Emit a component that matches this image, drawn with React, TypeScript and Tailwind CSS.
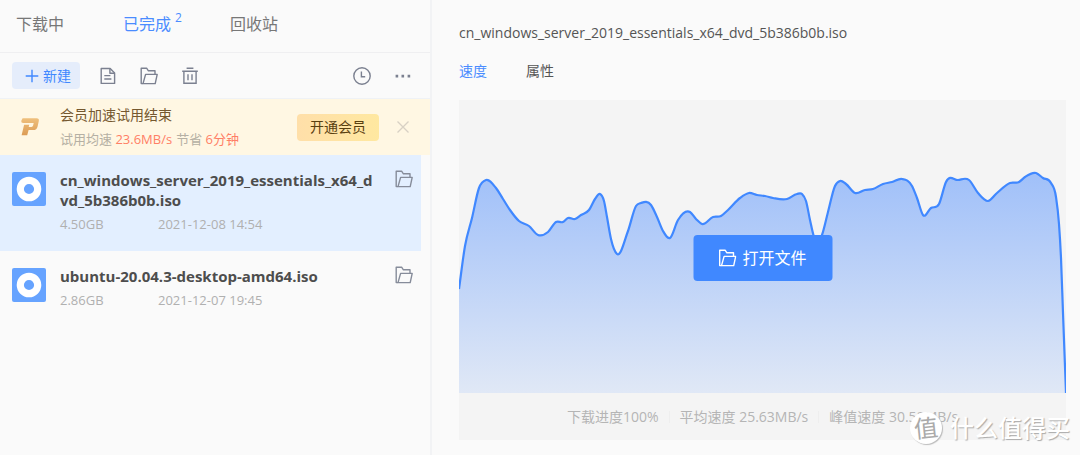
import { useState } from 'react';
import clsx from 'clsx';

type Point = [number, number];

const CHART_WIDTH = 607;
const CHART_HEIGHT = 293;

const speedPoints: Point[] = [
  [0, 189], [6, 146], [13, 118], [20, 88], [27, 80], [37, 88], [44, 99], [51, 110],
  [60, 121], [70, 126], [79, 135], [89, 132], [97, 122], [104, 122], [109, 118], [116, 119],
  [122, 115], [130, 110], [136, 99], [141, 94], [145, 101], [148, 117], [152, 139], [158, 154],
  [169, 131], [177, 106], [182, 103], [192, 105], [198, 117], [204, 131],
  [211, 138], [219, 120], [231, 112], [237, 119], [243, 124], [254, 117], [262, 116],
  [269, 110], [281, 98], [290, 93], [298, 95], [306, 96], [314, 98], [328, 99], [338, 94], [343, 94],
  [347, 101], [351, 120], [355, 137], [359, 143], [363, 135], [369, 112], [376, 86], [381, 81], [387, 84],
  [396, 93], [406, 90], [414, 89], [424, 84], [433, 82], [443, 79], [453, 86], [458, 98],
  [464, 115], [472, 108], [480, 104], [487, 82], [499, 80], [510, 80],
  [519, 93], [529, 101], [538, 93], [551, 83], [560, 82], [566, 77], [577, 73], [584, 78], [592, 83],
  [597, 97], [600, 124], [602, 158], [604, 213], [607, 293],
];

// Smooth curve through all points, the slope at each one weighted by its neighbours' distance
function smoothPath(points: Point[]) {
  const last = points.length - 1;
  const slopeTo = (i: number) => (points[i + 1][1] - points[i][1]) / (points[i + 1][0] - points[i][0]);
  const slopes = points.map((p, i) => {
    if (i === 0) return slopeTo(0);
    if (i === last) return slopeTo(last - 1);
    const before = p[0] - points[i - 1][0];
    const after = points[i + 1][0] - p[0];
    return (slopeTo(i - 1) * after + slopeTo(i) * before) / (before + after);
  });

  let d = `M${points[0][0]},${points[0][1]}`;
  for (let i = 0; i < last; i++) {
    const [x1, y1] = points[i];
    const [x2, y2] = points[i + 1];
    const h = (x2 - x1) / 3;
    d += ` C${x1 + h},${y1 + slopes[i] * h} ${x2 - h},${y2 - slopes[i + 1] * h} ${x2},${y2}`;
  }
  return d;
}

const tasks = [
  {
    id: 1,
    name: 'cn_windows_server_2019_essentials_x64_dvd_5b386b0b.iso',
    size: '4.50GB',
    time: '2021-12-08 14:54',
  },
  {
    id: 2,
    name: 'ubuntu-20.04.3-desktop-amd64.iso',
    size: '2.86GB',
    time: '2021-12-07 19:45',
  },
];

const tabs = [
  { id: 'downloading', label: '下载中' },
  { id: 'done', label: '已完成', count: 2 },
  { id: 'trash', label: '回收站' },
];

function FolderIcon({ className }: { className?: string }) {
  return (
    <svg viewBox="0 0 18 18" className={clsx('w-[18px] h-[18px]', className)} fill="none" stroke="currentColor" strokeWidth="1.4" strokeLinejoin="round">
      <path d="M3 16.6H1.2V1.2H6.6L8.4 3.8H15V7.2" />
      <path d="M3 16.6L5.6 7.4H17.2L15.2 16.6Z" />
    </svg>
  );
}

function FileIcon() {
  return (
    <svg viewBox="0 0 18 18" className="w-[18px] h-[18px]" fill="none" stroke="currentColor" strokeWidth="1.4" strokeLinejoin="round">
      <path d="M2.2 1.5H11.2L15.6 5.9V16.4H2.2Z" />
      <path d="M10.9 1.7V6.2H15.4M5.3 8.6H11.4M5.3 12H12.4" />
    </svg>
  );
}

function TrashIcon() {
  return (
    <svg viewBox="0 0 18 18" className="w-[18px] h-[18px]" fill="none" stroke="currentColor" strokeWidth="1.4">
      <path d="M1.2 4.2H16.8M5.6 1.3H12.4M2.9 4.2V16.3H15.1V4.2M7 7.2V13.2M11 7.2V13.2" />
    </svg>
  );
}

function ClockIcon() {
  return (
    <svg viewBox="0 0 18 18" className="w-[18px] h-[18px]" fill="none" stroke="currentColor" strokeWidth="1.4">
      <circle cx="9" cy="9" r="8.2" />
      <path d="M8.4 4.6V9.8H12.2" />
    </svg>
  );
}

function MoreIcon() {
  return (
    <svg viewBox="0 0 18 18" className="w-[18px] h-[18px]" fill="currentColor">
      <path d="M1.6 7.8h2.6v2.6H1.6zM7.5 7.8h2.6v2.6H7.5zM13.6 7.8h2.6v2.6h-2.6z" />
    </svg>
  );
}

function VipIcon() {
  return (
    <svg viewBox="0 0 20 20" className="w-5 h-5">
      <defs>
        <linearGradient id="vip" x1="0" y1="0" x2="0" y2="1">
          <stop offset="0" stopColor="#efc07d" />
          <stop offset="1" stopColor="#dc9c55" />
        </linearGradient>
      </defs>
      <path
        fill="url(#vip)"
        d="M2.6 1.2H16.6Q19.4 1.2 18.8 4L17.6 9.4Q16.8 13 13.2 13H8.6L7.2 18.2H1.6L4.1 7.8H9.2L8.7 10H11.4Q12.8 10 13.1 8.6L13.7 6.1H3.4Q.9 6.1 1.4 3.6Z"
      />
    </svg>
  );
}

function DiscIcon() {
  return (
    <svg viewBox="0 0 34 34" className="w-[34px] h-[34px] shrink-0">
      <rect width="34" height="34" rx="2" fill="#66a3ff" />
      <circle cx="17" cy="17" r="8.7" fill="none" stroke="#fff" strokeWidth="7.2" />
    </svg>
  );
}

function SpeedChart() {
  const line = smoothPath(speedPoints);
  return (
    <svg
      viewBox={`0 0 ${CHART_WIDTH} ${CHART_HEIGHT}`}
      preserveAspectRatio="none"
      className="block w-full h-[293px]"
    >
      <defs>
        <linearGradient id="speed" gradientUnits="userSpaceOnUse" x1="0" y1="73" x2="0" y2="293">
          <stop offset="0" stopColor="#a0c0f9" />
          <stop offset="1" stopColor="#e0e8f6" />
        </linearGradient>
      </defs>
      <path d={`${line} L0,${CHART_HEIGHT} Z`} fill="url(#speed)" />
      <path d={line} fill="none" stroke="#4088ff" strokeWidth="2.2" vectorEffect="non-scaling-stroke" />
    </svg>
  );
}

export default function App() {
  const [tab, setTab] = useState('done');
  const [detailTab, setDetailTab] = useState('speed');
  const [selected, setSelected] = useState(1);
  const [showBanner, setShowBanner] = useState(true);

  const current = tasks.find((task) => task.id === selected) || tasks[0];

  return (
    <div className="relative flex min-h-screen bg-[#fafafa] text-[#555] font-['Open_Sans','Noto_Sans_CJK_SC',sans-serif]">
      <aside className="w-[432px] shrink-0 border-r-2 border-[#f2f3f5]">
        <nav className="flex gap-[59px] h-[53px] px-4 pb-1 items-center border-b border-[#efeff1] text-base">
          {tabs.map((item) => (
            <button
              key={item.id}
              onClick={() => setTab(item.id)}
              className={clsx('relative', tab === item.id ? 'text-[#4a8cff]' : 'text-[#777]')}
            >
              {item.label}
              {item.count && <sup className="absolute -top-[2px] left-full ml-1 text-xs leading-4">{item.count}</sup>}
            </button>
          ))}
        </nav>

        <div className="flex items-center h-[46px] px-3 border-b border-[#eff2f6] text-[#7b8090]">
          <button className="flex items-center gap-1 h-[27px] pl-[13px] pr-[9px] mr-[19px] rounded bg-[#e5edfb] text-sm text-[#4088ff]">
            <svg viewBox="0 0 14 14" className="w-[14px] h-[14px]" stroke="currentColor" strokeWidth="1.4">
              <path d="M7 .7V13.3M.7 7H13.3" />
            </svg>
            新建
          </button>
          <div className="flex gap-[23px]">
            <button aria-label="下载列表"><FileIcon /></button>
            <button aria-label="打开文件夹"><FolderIcon /></button>
            <button aria-label="删除"><TrashIcon /></button>
          </div>
          <div className="flex gap-[23px] ml-auto pr-[6px]">
            <button aria-label="历史"><ClockIcon /></button>
            <button aria-label="更多"><MoreIcon /></button>
          </div>
        </div>

        {showBanner && (
          <div className="flex items-center h-14 pl-5 pr-5 bg-[#fff7e3]">
            <VipIcon />
            <div className="ml-5">
              <p className="text-sm leading-5 text-[#75582f]">会员加速试用结束</p>
              <p className="mt-1 text-[13px] leading-5 text-[#b5b0a4]">
                试用均速 <span className="text-[#ff7f66]">23.6MB/s</span>
                <span className="ml-1">节省 </span>
                <span className="text-[#ff7f66]">6分钟</span>
              </p>
            </div>
            <button className="h-[27px] px-[13px] ml-auto rounded bg-linear-to-r from-[#ffdfa9] to-[#ffe8a0] text-sm text-[#5a4010]">
              开通会员
            </button>
            <button aria-label="关闭" onClick={() => setShowBanner(false)} className="ml-[17px] text-[#d8d1c4]">
              <svg viewBox="0 0 14 14" className="w-[14px] h-[14px]" stroke="currentColor" strokeWidth="1.3">
                <path d="M1.5 1.5L12.5 12.5M12.5 1.5L1.5 12.5" />
              </svg>
            </button>
          </div>
        )}

        <ul className="mr-[9px]">
          {tasks.map((task) => (
            <li
              key={task.id}
              onClick={() => setSelected(task.id)}
              className={clsx('flex pl-3 pr-2 pt-[15px] pb-[17px]', task.id === selected && 'bg-[#e3efff]')}
            >
              <div className="pt-[2px]"><DiscIcon /></div>
              <div className="w-[318px] ml-[14px]">
                <h3 className="text-[15px] leading-5 font-bold text-[#4d4d4d] break-all">{task.name}</h3>
                <p className="flex mt-1 text-[13px] leading-5 text-[#b0b0b0]">
                  <span className="w-[98px]">{task.size}</span>
                  <span>{task.time}</span>
                </p>
              </div>
              <button aria-label="打开文件夹" className="self-start ml-auto text-[#868c9a]">
                <FolderIcon />
              </button>
            </li>
          ))}
        </ul>
      </aside>

      <main className="flex-1 min-w-0 pl-[27px] pr-[14px] pt-[23px] pb-[15px]">
        <h2 className="text-sm leading-5 truncate">{current.name}</h2>
        <div className="flex gap-[39px] mt-[18px] text-sm leading-5">
          <button
            onClick={() => setDetailTab('speed')}
            className={clsx(detailTab === 'speed' && 'text-[#4a8cff]')}
          >
            速度
          </button>
          <button
            onClick={() => setDetailTab('info')}
            className={clsx(detailTab === 'info' && 'text-[#4a8cff]')}
          >
            属性
          </button>
        </div>

        <section className="relative mt-[19px] bg-[#f4f4f4]">
          <SpeedChart />
          <button className="absolute top-[135px] left-1/2 -translate-x-1/2 flex items-center justify-center gap-[6px] w-[139px] h-[46px] rounded bg-[#4088ff] text-base text-white">
            <FolderIcon />
            打开文件
          </button>
          <div className="flex items-center justify-center h-[47px] text-sm text-[#b5b5b5]">
            <span className="pr-[10px] leading-3 border-r border-[#eee]">下载进度100%</span>
            <span className="px-[10px] leading-3 border-r border-[#eee]">平均速度 25.63MB/s</span>
            <span className="pl-[10px] leading-3">峰值速度 30.52MB/s</span>
          </div>
        </section>
      </main>

      <div className="absolute right-[10px] bottom-[11px] flex items-center gap-2 pointer-events-none">
        <span className="flex items-center justify-center w-8 h-8 rounded-full bg-white text-2xl text-[#aaa] shadow-[1px_1px_1px_#bbb]">
          <span className="-rotate-6">值</span>
        </span>
        <span className="text-2xl leading-8 font-medium text-white text-shadow-[1px_1px_1px_#aaa]">什么值得买</span>
      </div>
    </div>
  );
}
